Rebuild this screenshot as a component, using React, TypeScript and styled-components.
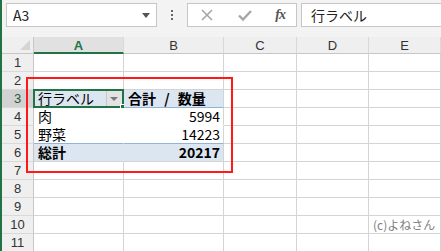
import React from "react";
import styled, { createGlobalStyle, css } from "styled-components";

const GlobalStyle = createGlobalStyle`
  html, body {
    margin: 0;
    padding: 0;
    background: #ffffff;
  }
  body {
    font-family: "Noto Sans CJK JP", "Liberation Sans", sans-serif;
  }
`;

const Window = styled.div`
  width: 441px;
  height: 251px;
  overflow: hidden;
  display: flex;
  background: #ffffff;
`;

const EdgeLine = styled.div`
  width: 2px;
  flex: none;
  background: #217346;
`;

const Main = styled.div`
  flex: 1;
  display: flex;
  flex-direction: column;
  min-width: 0;
`;

const FormulaBar = styled.div`
  height: 37px;
  flex: none;
  background: #f3f3f3;
  display: flex;
  align-items: flex-start;
  padding: 3px 0 0 4px;
  box-sizing: border-box;
`;

const NameBox = styled.div`
  width: 151px;
  height: 24px;
  box-sizing: border-box;
  background: #ffffff;
  border: 1px solid #c6c6c6;
  display: flex;
  align-items: center;
  justify-content: space-between;
  padding: 0 6px 0 6px;
  font-size: 14px;
  color: #222;
`;

const DropArrow = styled.span`
  width: 0;
  height: 0;
  border-left: 4px solid transparent;
  border-right: 4px solid transparent;
  border-top: 5px solid #555;
`;

const Dots = styled.div`
  width: 30px;
  height: 24px;
  display: flex;
  flex-direction: column;
  align-items: center;
  justify-content: center;
  gap: 2px;

  span {
    width: 2px;
    height: 2px;
    background: #666;
  }
`;

const FuncBox = styled.div`
  width: 110px;
  height: 24px;
  box-sizing: border-box;
  background: #ffffff;
  border: 1px solid #c6c6c6;
  display: flex;
  align-items: center;
  justify-content: space-between;
  padding: 0 11px 0 12px;
`;

const Fx = styled.span`
  font-family: "Liberation Serif", serif;
  font-style: italic;
  font-weight: bold;
  font-size: 14px;
  color: #555;
  letter-spacing: -1px;
`;

const InputBox = styled.div`
  flex: 1;
  margin-left: 4px;
  height: 24px;
  box-sizing: border-box;
  background: #ffffff;
  border: 1px solid #c6c6c6;
  border-right: none;
  display: flex;
  align-items: center;
  padding-left: 9px;
  font-size: 14px;
  color: #222;
`;

const SheetArea = styled.div`
  position: relative;
  flex: 1;
`;

const Grid = styled.div`
  display: grid;
  grid-template-columns: 32px 90px 100px 73px 72px 1fr;
  grid-template-rows: 17px repeat(11, 18px);
`;

const Corner = styled.div`
  background: #efefef;
  border-right: 1px solid #c6c6c6;
  border-bottom: 1px solid #c6c6c6;
  box-sizing: border-box;
  position: relative;

  &::after {
    content: "";
    position: absolute;
    right: 3px;
    bottom: 3px;
    width: 0;
    height: 0;
    border-left: 10px solid transparent;
    border-bottom: 10px solid #d4d4d4;
  }
`;

const ColHeader = styled.div<{ $active?: boolean }>`
  box-sizing: border-box;
  background: ${(p) => (p.$active ? "#e1e1e1" : "#efefef")};
  border-right: 1px solid #d9d9d9;
  border-bottom: ${(p) => (p.$active ? "2px solid #217346" : "1px solid #c6c6c6")};
  font-family: "Liberation Sans", sans-serif;
  font-size: 13px;
  font-weight: ${(p) => (p.$active ? "bold" : "normal")};
  color: ${(p) => (p.$active ? "#217346" : "#333")};
  display: flex;
  align-items: center;
  justify-content: center;
  padding-top: ${(p) => (p.$active ? "1px" : "0")};
`;

const RowHeader = styled.div<{ $active?: boolean }>`
  box-sizing: border-box;
  background: ${(p) => (p.$active ? "#d2d2d2" : "#efefef")};
  border-right: 1px solid #c6c6c6;
  border-bottom: 1px solid #d9d9d9;
  font-family: "Liberation Sans", sans-serif;
  font-size: 13px;
  color: ${(p) => (p.$active ? "#1e5a38" : "#333")};
  display: flex;
  align-items: flex-end;
  justify-content: center;
  line-height: 17px;
`;

type Tone = "plain" | "pivotHead" | "pivotBody" | "pivotBodyLast" | "pivotTotal";

const toneStyles: Record<Tone, ReturnType<typeof css>> = {
  plain: css`
    background: #ffffff;
    border-bottom: 1px solid #d4d4d4;
  `,
  pivotHead: css`
    background: #dce6f1;
    border-bottom: 1px solid #95b3d7;
  `,
  pivotBody: css`
    background: #ffffff;
    border-bottom: 1px solid #ffffff;
  `,
  pivotBodyLast: css`
    background: #ffffff;
    border-bottom: 1px solid #95b3d7;
  `,
  pivotTotal: css`
    background: #dce6f1;
    border-bottom: 1px solid #d4d4d4;
  `,
};

const Cell = styled.div<{
  $tone?: Tone;
  $right?: boolean;
  $bold?: boolean;
  $noLine?: boolean;
}>`
  position: relative;
  box-sizing: border-box;
  border-right: 1px solid ${(p) => (p.$noLine ? "transparent" : "#d4d4d4")};
  ${(p) => toneStyles[p.$tone || "plain"]};
  font-size: 14px;
  line-height: 17px;
  color: #000;
  font-weight: ${(p) => (p.$bold ? "bold" : "normal")};
  text-align: ${(p) => (p.$right ? "right" : "left")};
  padding: 0 3px 0 4px;
  white-space: nowrap;
`;

const SumLabel = styled.span`
  word-spacing: 5px;
`;

const Selection = styled.div`
  position: absolute;
  left: -1px;
  top: -1px;
  right: -1px;
  bottom: -1px;
  border: 2px solid #217346;
  pointer-events: none;
`;

const FillHandle = styled.div`
  position: absolute;
  right: -4px;
  bottom: -4px;
  width: 5px;
  height: 5px;
  background: #217346;
  border: 1px solid #ffffff;
`;

const FilterButton = styled.div`
  position: absolute;
  right: 2px;
  top: 1px;
  width: 15px;
  height: 15px;
  box-sizing: border-box;
  background: #e3e3e3;
  border-left: 1px solid #c8c8c8;
  display: flex;
  align-items: center;
  justify-content: center;

  &::after {
    content: "";
    border-left: 4px solid transparent;
    border-right: 4px solid transparent;
    border-top: 4px solid #7a7a7a;
  }
`;

const Watermark = styled.span`
  font-size: 12px;
  color: #808080;
`;

const Highlight = styled.div`
  position: absolute;
  left: 24px;
  top: 40px;
  width: 207px;
  height: 96px;
  box-sizing: border-box;
  border: 2px solid #ff1a1a;
  pointer-events: none;
`;

const columns = ["A", "B", "C", "D", "E"];

const XIcon = () => (
  <svg width="14" height="14" viewBox="0 0 14 14">
    <path d="M2 2 L12 12 M12 2 L2 12" stroke="#a6a6a6" strokeWidth="1.6" fill="none" />
  </svg>
);

const CheckIcon = () => (
  <svg width="16" height="14" viewBox="0 0 16 14">
    <path d="M2 7.5 L6 11.5 L14 3" stroke="#a6a6a6" strokeWidth="2.4" fill="none" />
  </svg>
);

const App: React.FC = () => {
  const emptyRow = (n: number) => (
    <React.Fragment key={n}>
      <RowHeader>{n}</RowHeader>
      {columns.map((c) => (
        <Cell key={c} />
      ))}
    </React.Fragment>
  );

  return (
    <>
      <GlobalStyle />
      <Window>
        <EdgeLine />
        <Main>
          <FormulaBar>
            <NameBox>
              A3
              <DropArrow />
            </NameBox>
            <Dots>
              <span />
              <span />
              <span />
            </Dots>
            <FuncBox>
              <XIcon />
              <CheckIcon />
              <Fx>fx</Fx>
            </FuncBox>
            <InputBox>行ラベル</InputBox>
          </FormulaBar>
          <SheetArea>
            <Grid>
              <Corner />
              {columns.map((c) => (
                <ColHeader key={c} $active={c === "A"}>
                  {c}
                </ColHeader>
              ))}

              {emptyRow(1)}
              {emptyRow(2)}

              <RowHeader $active>3</RowHeader>
              <Cell $tone="pivotHead" $noLine>
                行ラベル
                <FilterButton />
                <Selection />
                <FillHandle />
              </Cell>
              <Cell $tone="pivotHead" $bold>
                <SumLabel>合計 / 数量</SumLabel>
              </Cell>
              <Cell />
              <Cell />
              <Cell />

              <RowHeader>4</RowHeader>
              <Cell $tone="pivotBody" $noLine>
                肉
              </Cell>
              <Cell $tone="pivotBody" $right>
                5994
              </Cell>
              <Cell />
              <Cell />
              <Cell />

              <RowHeader>5</RowHeader>
              <Cell $tone="pivotBodyLast" $noLine>
                野菜
              </Cell>
              <Cell $tone="pivotBodyLast" $right>
                14223
              </Cell>
              <Cell />
              <Cell />
              <Cell />

              <RowHeader>6</RowHeader>
              <Cell $tone="pivotTotal" $bold $noLine>
                総計
              </Cell>
              <Cell $tone="pivotTotal" $bold $right>
                20217
              </Cell>
              <Cell />
              <Cell />
              <Cell />

              {emptyRow(7)}
              {emptyRow(8)}
              {emptyRow(9)}

              <RowHeader>10</RowHeader>
              <Cell />
              <Cell />
              <Cell />
              <Cell />
              <Cell>
                <Watermark>(c)よねさん</Watermark>
              </Cell>

              {emptyRow(11)}
            </Grid>
            <Highlight />
          </SheetArea>
        </Main>
      </Window>
    </>
  );
};

export default App;
